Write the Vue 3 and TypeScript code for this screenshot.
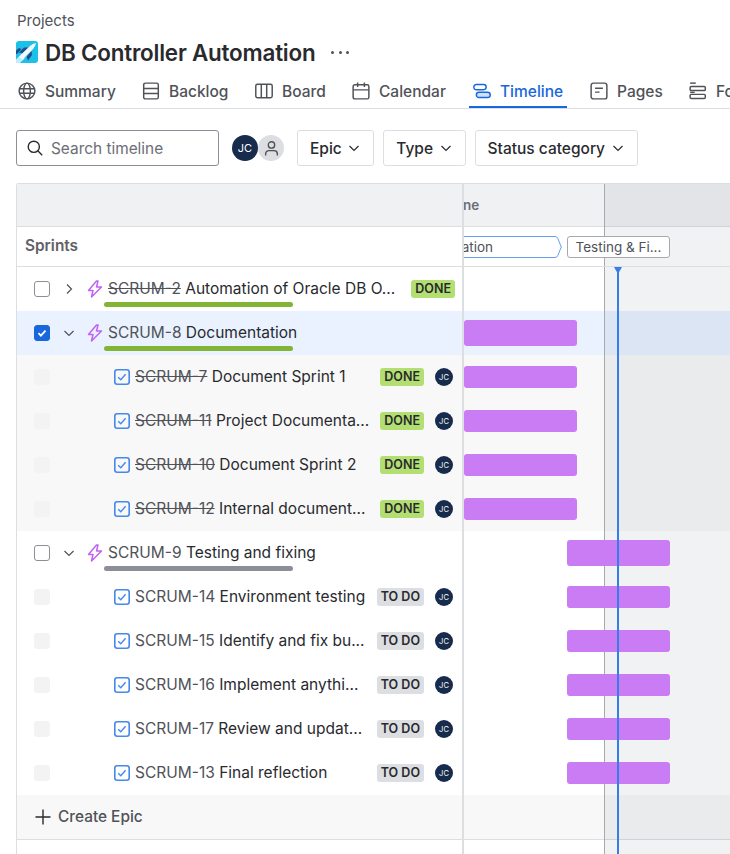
<template>
  <div class="page">
    <header class="head">
      <div class="crumb">Projects</div>
      <div class="title-row">
        <svg class="logo" viewBox="0 0 22 22" width="22" height="22">
          <rect width="22" height="22" rx="3" fill="#1fc0e8" />
          <path d="M3 11.5 L8 6.5 L12.5 6.5 L7 12.5 Z" fill="#1f4e8c" />
          <path d="M0 9.5 L3 7 L5.5 8 L1 13 L0 13 Z" fill="#1f4e8c" />
          <path d="M10.5 15.5 L15.5 10 L16 14 L12 19.5 Z" fill="#1f4e8c" />
          <path d="M2.5 16 L14 5 Q17 2.5 20 2 Q19.5 5 17 8 L6.5 19.5 Z" fill="#f2fbff" />
          <path d="M0 22 L0 18.5 L2.5 16 L6.5 19.5 L4 22 Z" fill="#c4ecf9" />
          <path d="M8 17 L14 11" stroke="#9fdcf2" stroke-width="1" />
        </svg>
        <h1>DB Controller Automation</h1>
        <span class="more"><i></i><i></i><i></i></span>
      </div>
      <nav class="tabs">
        <a v-for="tab in tabs" :key="tab.label" class="tab" :class="{ active: tab.label === 'Timeline' }" :style="{ width: tab.width + 'px' }">
          <svg viewBox="0 0 16 16" width="18" height="18" fill="none" stroke="currentColor" stroke-width="1.3">
            <g v-if="tab.label === 'Summary'">
              <circle cx="8" cy="8" r="7" />
              <ellipse cx="8" cy="8" rx="3" ry="7" />
              <path d="M1 6h14M1 10h14" />
            </g>
            <g v-else-if="tab.label === 'Backlog'">
              <rect x="1.5" y="1" width="13" height="14" rx="1.5" />
              <path d="M1.5 5.7h13M1.5 10.3h13" />
            </g>
            <g v-else-if="tab.label === 'Board'">
              <rect x="0.7" y="2" width="14.6" height="12" rx="1.5" />
              <path d="M5.6 2v12M10.4 2v12" />
            </g>
            <g v-else-if="tab.label === 'Calendar'">
              <rect x="1" y="2.5" width="14" height="12.5" rx="1.5" />
              <path d="M1 7h14M5 0.5v4M11 0.5v4" />
            </g>
            <g v-else-if="tab.label === 'Timeline'">
              <rect x="0.7" y="2.2" width="11" height="4.6" rx="2.3" />
              <rect x="3" y="9.2" width="12.3" height="4.6" rx="2.3" fill="#cfe1fd" />
            </g>
            <g v-else-if="tab.label === 'Pages'">
              <rect x="1" y="1" width="14" height="14" rx="2" />
              <path d="M4.5 5.5h7M4.5 9h4" />
            </g>
            <g v-else>
              <path d="M1 1h5" />
              <rect x="1" y="4" width="13.5" height="3.6" rx="1" />
              <rect x="1" y="11" width="13.5" height="3.6" rx="1" />
              <path d="M1 9.2h4" />
            </g>
          </svg>
          <span>{{ tab.label }}</span>
        </a>
      </nav>
    </header>

    <div class="filters">
      <div class="search">
        <svg viewBox="0 0 16 16" width="16" height="16" fill="none" stroke="#292a2e" stroke-width="1.4">
          <circle cx="6.8" cy="6.8" r="5.6" />
          <path d="M10.8 10.8l4.4 4.4" />
        </svg>
        <span>Search timeline</span>
      </div>
      <div class="avatars">
        <span class="avatar-jc">JC</span>
        <span class="avatar-none">
          <svg viewBox="0 0 16 16" width="17" height="17" fill="none" stroke="#505258" stroke-width="1.3">
            <circle cx="8" cy="4.6" r="3" />
            <path d="M2.5 14.5v-1.5a3 3 0 0 1 3-3h5a3 3 0 0 1 3 3v1.5" />
          </svg>
        </span>
      </div>
      <button v-for="f in filters" :key="f" class="filter">
        {{ f }}
        <svg viewBox="0 0 12 12" width="12" height="12" fill="none" stroke="#292a2e" stroke-width="1.2"><path d="M1.5 4l4.5 4.5L10.5 4" /></svg>
      </button>
    </div>

    <section class="timeline">
      <div class="left">
        <div class="band"></div>
        <div class="sprints">Sprints</div>
        <div v-for="row in rows" :key="row.key" class="row" :class="rowClass(row)">
          <span v-if="row.epic" class="check" :class="{ checked: row.checked }">
            <svg v-if="row.checked" viewBox="0 0 12 12" width="12" height="12" fill="none" stroke="#fff" stroke-width="1.8"><path d="M2.5 6.2l2.4 2.4 4.6-5" /></svg>
          </span>
          <span v-else class="check disabled"></span>
          <template v-if="row.epic">
            <svg class="chev" viewBox="0 0 12 12" width="12" height="12" fill="none" stroke="#505258" stroke-width="1.2">
              <path v-if="row.collapsed" d="M4 1.5L8.5 6 4 10.5" />
              <path v-else d="M1.5 4L6 8.5 10.5 4" />
            </svg>
            <svg class="bolt" viewBox="0 0 16 18" width="16" height="18" fill="none" stroke="#bf63f3" stroke-width="1.5" stroke-linejoin="round">
              <path d="M9.5 1L1.5 10.5H6L4.5 17 14.5 7H9.5L11 1Z" />
            </svg>
          </template>
          <svg v-else class="task" viewBox="0 0 16 16" width="16" height="16" fill="none">
            <rect x="0.8" y="0.8" width="14.4" height="14.4" rx="2.4" stroke="#4688ec" stroke-width="1.6" />
            <path d="M4.2 8.2l2.6 2.6 4.8-5.6" stroke="#4688ec" stroke-width="1.4" />
          </svg>
          <span class="summary">
            <span class="key" :class="{ struck: row.struck }">{{ row.key }}</span>
            {{ row.name }}
          </span>
          <span v-if="row.status" class="lozenge" :class="row.status === 'DONE' ? 'done' : 'todo'">{{ row.status }}</span>
          <span v-if="!row.epic" class="mini-avatar">JC</span>
          <span v-if="row.progress" class="progress" :style="{ background: row.progress }"></span>
        </div>
        <div class="create">
          <svg viewBox="0 0 16 16" width="16" height="16" fill="none" stroke="#292a2e" stroke-width="1.4"><path d="M8 0.5v15M0.5 8h15" /></svg>
          <span>Create Epic</span>
        </div>
      </div>

      <div class="right">
        <div class="today-shade"></div>
        <div class="band month"><span class="month-label">June</span></div>
        <div class="sprint-row">
          <span class="pill current">
            <svg viewBox="0 0 235 22" width="235" height="22">
              <path d="M0.5 0.5H228Q230 0.5 230.8 2.5L234.3 11 230.8 19.5Q230 21.5 228 21.5H0.5Z" fill="#fff" stroke="#669df1" />
            </svg>
            <span>Documentation</span>
          </span>
          <span class="pill next">Testing &amp; Fi...</span>
        </div>
        <div v-for="row in rows" :key="row.key" class="lane" :class="rowClass(row)">
          <span v-if="row.bar" class="bar" :style="{ left: row.bar[0] + 'px', width: row.bar[1] + 'px' }"></span>
        </div>
        <div class="lane create-lane"></div>
        <div class="today-line"></div>
      </div>
    </section>
  </div>
</template>

<script setup lang="ts">
type Row = {
  key: string
  name: string
  status?: 'DONE' | 'TO DO'
  epic?: boolean
  checked?: boolean
  collapsed?: boolean
  shaded?: boolean
  struck?: boolean
  progress?: string
  bar?: [number, number]
}

const tabs = [
  { label: 'Summary', width: 105 },
  { label: 'Backlog', width: 94 },
  { label: 'Board', width: 78 },
  { label: 'Calendar', width: 102 },
  { label: 'Timeline', width: 98 },
  { label: 'Pages', width: 80 },
  { label: 'Forms', width: 80 },
]

const filters = ['Epic', 'Type', 'Status category']

const GREEN = '#82b536'
const GRAY = '#8c8f97'
const doneBar: [number, number] = [0, 113]
const todoBar: [number, number] = [103, 103]

const rows: Row[] = [
  { key: 'SCRUM-2', name: 'Automation of Oracle DB O...', status: 'DONE', struck: true, epic: true, collapsed: true, progress: GREEN },
  { key: 'SCRUM-8', name: 'Documentation', epic: true, checked: true, progress: GREEN, bar: doneBar },
  { key: 'SCRUM-7', name: 'Document Sprint 1', status: 'DONE', struck: true, shaded: true, bar: doneBar },
  { key: 'SCRUM-11', name: 'Project Documenta...', status: 'DONE', struck: true, shaded: true, bar: doneBar },
  { key: 'SCRUM-10', name: 'Document Sprint 2', status: 'DONE', struck: true, shaded: true, bar: doneBar },
  { key: 'SCRUM-12', name: 'Internal document...', status: 'DONE', struck: true, shaded: true, bar: doneBar },
  { key: 'SCRUM-9', name: 'Testing and fixing', epic: true, progress: GRAY, bar: todoBar },
  { key: 'SCRUM-14', name: 'Environment testing', status: 'TO DO', bar: todoBar },
  { key: 'SCRUM-15', name: 'Identify and fix bu...', status: 'TO DO', bar: todoBar },
  { key: 'SCRUM-16', name: 'Implement anythi...', status: 'TO DO', bar: todoBar },
  { key: 'SCRUM-17', name: 'Review and updat...', status: 'TO DO', bar: todoBar },
  { key: 'SCRUM-13', name: 'Final reflection', status: 'TO DO', bar: todoBar },
]

const rowClass = (row: Row) => ({
  selected: row.checked,
  shaded: row.shaded,
  epic: row.epic,
})
</script>

<style>
html,
body {
  margin: 0;
  background: #fff;
  overflow: hidden;
}
</style>

<style scoped>
.page {
  width: 730px;
  height: 854px;
  overflow: hidden;
  font-family: Inter, "Liberation Sans", sans-serif;
  color: #292a2e;
  font-size: 15.4px;
}
.head {
  height: 108px;
  border-bottom: 1px solid #dddee1;
  box-sizing: content-box;
}
.crumb {
  padding: 12px 0 0 17px;
  height: 41px;
  box-sizing: border-box;
  color: #505258;
  font-size: 15px;
  line-height: 18px;
}
.title-row {
  display: flex;
  align-items: center;
  height: 22px;
  padding-left: 16px;
}
.title-row h1 {
  margin: 0 0 0 7px;
  font-size: 22.4px;
  font-weight: 600;
  letter-spacing: -0.2px;
  white-space: nowrap;
}
.more {
  display: flex;
  gap: 4.5px;
  margin-left: 16px;
}
.more i {
  width: 3px;
  height: 3px;
  border-radius: 50%;
  background: #505258;
}
.tabs {
  display: flex;
  margin-top: 3px;
  padding-left: 14px;
  gap: 19px;
  width: 800px;
}
.tab {
  display: flex;
  align-items: center;
  gap: 9px;
  height: 42px;
  padding: 10px 4px 0;
  box-sizing: border-box;
  flex: none;
  color: #505258;
  font-size: 15.5px;
  font-weight: 500;
  white-space: nowrap;
  border-bottom: 2px solid transparent;
}
.tab svg {
  flex: none;
}
.tab.active {
  color: #1868db;
  border-bottom-color: #1868db;
}
.filters {
  display: flex;
  align-items: center;
  padding: 21px 0 0 16px;
  height: 36px;
}
.search {
  display: flex;
  align-items: center;
  gap: 8px;
  width: 203px;
  height: 36px;
  box-sizing: border-box;
  padding-left: 10px;
  border: 1px solid #8c8f97;
  border-radius: 3px;
  color: #6b6e76;
}
.avatars {
  display: flex;
  margin: 0 13px 0 13px;
}
.avatar-jc {
  width: 26px;
  height: 26px;
  border-radius: 50%;
  background: #172b4d;
  color: #fff;
  font-size: 11px;
  display: flex;
  align-items: center;
  justify-content: center;
  position: relative;
}
.avatar-none {
  width: 26px;
  height: 26px;
  border-radius: 50%;
  background: #dddee1;
  display: flex;
  align-items: center;
  justify-content: center;
}
.filter {
  display: flex;
  align-items: center;
  gap: 6.5px;
  height: 36px;
  padding: 0 13px 0 12px;
  margin-right: 9px;
  background: #fff;
  border: 1px solid #dddee1;
  border-radius: 3px;
  font: inherit;
  font-size: 15.5px;
  font-weight: 500;
  color: #292a2e;
}
.timeline {
  display: flex;
  margin: 17px 0 0 16px;
  border: 1px solid #dddee1;
  border-right: 0;
  border-bottom: 0;
  border-top-left-radius: 3px;
  height: 671px;
}
.left {
  position: relative;
  z-index: 2;
  flex: none;
  width: 445px;
  border-right: 2px solid #dddee1;
  background: #fff;
}
.band {
  height: 42px;
  background: #f0f1f2;
  border-bottom: 1px solid #dddee1;
}
.sprints {
  height: 39px;
  line-height: 37px;
  padding-left: 8px;
  border-bottom: 1px solid #dddee1;
  box-sizing: content-box;
  color: #5f6168;
  font-weight: 600;
}
.row {
  position: relative;
  display: flex;
  align-items: center;
  height: 44px;
  padding-right: 9px;
  white-space: nowrap;
}
.row.epic {
  padding-right: 7px;
}
.row.selected {
  background: #e9f2fe;
}
.row.shaded {
  background: #f8f8f8;
}
.check {
  flex: none;
  width: 16px;
  height: 16px;
  margin-left: 17px;
  box-sizing: border-box;
  border: 1px solid #8c8f97;
  border-radius: 3px;
  background: #fff;
  display: flex;
  align-items: center;
  justify-content: center;
}
.check.checked {
  background: #1868db;
  border-color: #1868db;
}
.check.disabled {
  background: #f3f3f4;
  border-color: #f3f3f4;
}
.chev {
  margin-left: 13px;
  flex: none;
}
.bolt {
  margin-left: 12px;
  flex: none;
}
.task {
  margin-left: 64px;
  flex: none;
}
.summary {
  flex: 1;
  margin-left: 5px;
  padding-bottom: 2px;
  min-width: 0;
  overflow: hidden;
  font-size: 15.5px;
}
.epic .summary {
  margin-left: 5px;
}
.key {
  color: #505258;
}
.key.struck {
  text-decoration: line-through;
}
.lozenge {
  flex: none;
  height: 18px;
  line-height: 18px;
  padding: 0 4px;
  border-radius: 3px;
  font-size: 12.5px;
  font-weight: 600;
  color: #292a2e;
}
.lozenge.done {
  background: #b3df72;
}
.lozenge.todo {
  background: #dddee1;
}
.mini-avatar {
  flex: none;
  width: 18px;
  height: 18px;
  margin-left: 11px;
  border-radius: 50%;
  background: #172b4d;
  color: #fff;
  font-size: 7.5px;
  display: flex;
  align-items: center;
  justify-content: center;
}
.progress {
  position: absolute;
  left: 87px;
  bottom: 4px;
  width: 189px;
  height: 5px;
  border-radius: 3px;
}
.create {
  display: flex;
  align-items: center;
  gap: 7px;
  height: 44px;
  padding-left: 18px;
  background: #f8f8f8;
  border-bottom: 1px solid #dddee1;
  color: #505258;
  font-weight: 500;
}
.create span {
  padding-bottom: 2px;
}
.right {
  position: relative;
  flex: 1;
  min-width: 0;
  overflow: hidden;
}
.today-shade {
  position: absolute;
  z-index: 1;
  top: 0;
  bottom: 0;
  left: 140px;
  right: 0;
  background: rgba(9, 30, 66, 0.06);
  border-left: 1px solid #a8a9ad;
  pointer-events: none;
}
.month-label {
  display: inline-block;
  margin-left: -17px;
  line-height: 42px;
  color: #6b6e76;
  font-weight: 600;
  font-size: 13.5px;
}
.sprint-row {
  position: relative;
  z-index: 2;
  display: flex;
  align-items: center;
  gap: 5px;
  height: 39px;
  border-bottom: 1px solid #dddee1;
}
.pill {
  flex: none;
  box-sizing: border-box;
  height: 22px;
  line-height: 20px;
  border: 1px solid #a8a9ad;
  border-radius: 3px;
  background: #fff;
  font-size: 13.5px;
  color: #505258;
  text-align: center;
  white-space: nowrap;
}
.pill.current {
  position: relative;
  width: 235px;
  margin-left: -137px;
  border: 0;
  background: none;
  line-height: 22px;
}
.pill.current svg {
  position: absolute;
  inset: 0;
}
.pill.current span {
  position: relative;
}
.pill.next {
  width: 103px;
}
.lane {
  position: relative;
  height: 44px;
}
.lane.selected {
  background: #e9f2fe;
}
.lane.shaded {
  background: #f8f8f8;
}
.create-lane {
  background: #f8f8f8;
  border-bottom: 1px solid #dddee1;
}
.bar {
  position: absolute;
  z-index: 2;
  top: 11px;
  height: 22px;
  background: #c97cf4;
  border-radius: 3px;
}
.lane.epic .bar {
  top: 9px;
  height: 26px;
}
.today-line {
  position: absolute;
  z-index: 3;
  top: 83px;
  bottom: 0;
  left: 153px;
  width: 2px;
  background: #357de8;
}
.today-line::before {
  content: "";
  position: absolute;
  top: 0;
  left: -3px;
  border-left: 4px solid transparent;
  border-right: 4px solid transparent;
  border-top: 7px solid #357de8;
}
</style>
